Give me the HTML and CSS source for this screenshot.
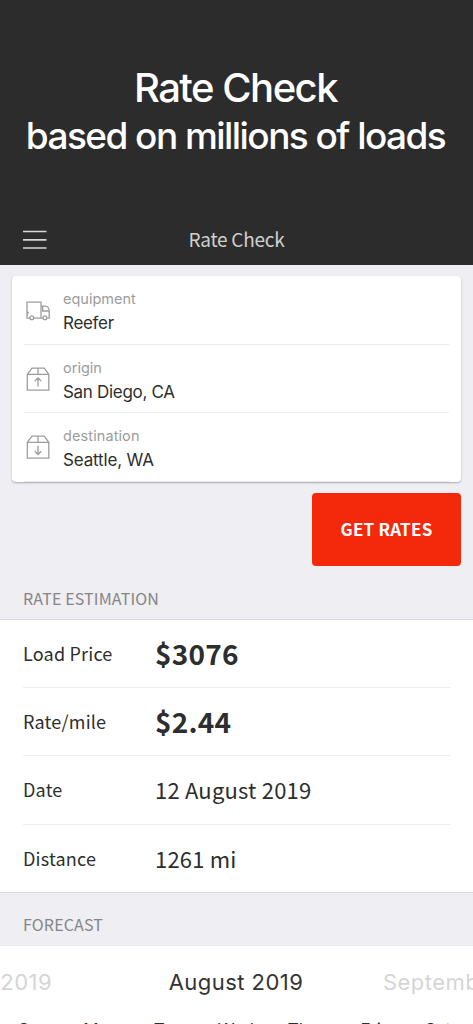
FILE: index.html
```html
<!DOCTYPE html>
<html lang="en">
<head>
<meta charset="utf-8">
<title>Rate Check</title>
<link rel="stylesheet" href="styles.css">
</head>
<body>
<main class="screen">
  <header class="hero">
    <h1 class="headline"><span class="headline-top">Rate Check</span><br><span class="headline-sub">based on millions of loads</span></h1>
    <nav class="nav">
      <svg class="menu" viewBox="0 0 24 20" stroke="#d6d6d6" stroke-width="1.7"><path d="M0 1.5H23.5M0 9.8H23.5M0 18H23.5"/></svg>
      <span class="nav-title">Rate Check</span>
    </nav>
  </header>
  <section class="card">
    <div class="field">
      <svg class="icon truck" viewBox="0 0 24 24"><path d="M4 18.2H1V2.2H15V18.2H7M15 6.2H19.5C22 6.4 23.2 9 23.2 11V18.2H21.2M15.2 18.2H17.2M16.7 6.2V11H23M1 12.5H3M1 15H2.2"/><circle cx="5.8" cy="17.8" r="1.9"/><circle cx="18.9" cy="17.8" r="1.9"/></svg>
      <div class="field-text"><span class="label">equipment</span><span class="value">Reefer</span></div>
    </div>
    <div class="field">
      <svg class="icon" viewBox="0 0 24 24"><path d="M1.3 7.3L6 1.1H18.2L22.8 7.3V23.2H1.3ZM1.3 7.3H22.8M12 1.1V7.3M12 19.5V11M8.8 14L12 10.8L15.2 14"/></svg>
      <div class="field-text"><span class="label">origin</span><span class="value">San Diego, CA</span></div>
    </div>
    <div class="field">
      <svg class="icon" viewBox="0 0 24 24"><path d="M1.3 7.3L6 1.1H18.2L22.8 7.3V23.2H1.3ZM1.3 7.3H22.8M12 1.1V7.3M12 10.8V19.3M8.8 16.3L12 19.5L15.2 16.3"/></svg>
      <div class="field-text"><span class="label destination">destination</span><span class="value seattle">Seattle, WA</span></div>
    </div>
  </section>
  <button class="cta" type="button">GET RATES</button>
  <h2 class="section-title estimation-title">RATE ESTIMATION</h2>
  <section class="rates">
    <div class="rate"><span class="name">Load Price</span><strong class="amount">$3076</strong></div>
    <div class="rate second"><span class="name">Rate/mile</span><strong class="amount">$2.44</strong></div>
    <div class="rate"><span class="name">Date</span><span class="detail">12 August 2019</span></div>
    <div class="rate"><span class="name">Distance</span><span class="detail">1261 mi</span></div>
  </section>
  <h2 class="section-title forecast-title">FORECAST</h2>
  <section class="forecast">
    <div class="months"><span class="prev">July 2019</span><span class="current">August 2019</span><span class="next">September 2019</span></div>
    <div class="days"><span>Sun</span><span>Mon</span><span>Tue</span><span>Wed</span><span>Thu</span><span>Fri</span><span>Sat</span></div>
  </section>
</main>
</body>
</html>
```
FILE: styles.css
```css
* { box-sizing: border-box; }
body { margin: 0; font-family: "Noto Sans CJK SC", sans-serif; color: #2d2e2e; }
.screen { width: 473px; height: 1024px; overflow: hidden; background: #efeef3; white-space: nowrap; }
.hero { height: 265px; background: #2c2c2c; padding-top: 64px; }
.headline { margin: 0; height: 150px; padding-right: 2px; font: 500 40px/47px Inter, sans-serif; color: #fff; text-align: center; }
.headline-top { letter-spacing: -1.5px; }
.headline-sub { font-size: 37px; letter-spacing: -1.55px; }
.nav { display: grid; grid-template-columns: 1fr auto 1fr; align-items: center; height: 51px; padding: 0 23px; }
.menu { width: 24px; height: 20px; }
.nav-title { font-size: 19px; line-height: 28px; padding-bottom: 2px; letter-spacing: -0.25px; color: #d0d0d0; }
.card { margin: 11px 12px 0; height: 206px; padding: 0 12px; background: #fff; border-radius: 4px; box-shadow: 0 1px 2px rgba(0,0,0,.3); }
.field { display: flex; height: 68.5px; padding: 12px 0 0 2px; border-bottom: 1px solid #ebebed; }
.icon { flex: none; width: 24px; height: 24px; margin-top: 10px; fill: none; stroke: #9d9d9d; stroke-width: 1.3; }
.truck { margin-top: 12px; }
.field-text { display: flex; flex-direction: column; margin-left: 13px; font-family: Inter, sans-serif; }
.label { font-size: 14.5px; line-height: 22px; color: #9c9c9c; }
.destination { letter-spacing: 0.1px; }
.value { font-size: 17px; line-height: 26px; letter-spacing: -0.3px; }
.seattle { letter-spacing: -0.15px; }
.cta { display: block; margin: 11px 12px 0 auto; width: 149px; height: 73px; padding: 0 0 1px; border: 0; border-radius: 4px; background: #f4290b; color: #fff; font: 700 17px/24px "Noto Sans CJK SC", sans-serif; letter-spacing: 0.25px; }
.section-title { margin: 0; padding-left: 23px; color: #858585; font-size: 16px; font-weight: 400; letter-spacing: 0.15px; }
.estimation-title { height: 53px; line-height: 65px; }
.rates { height: 274px; padding: 0 23px; background: #fff; border-top: 1px solid #d8d8dc; border-bottom: 1px solid #d8d8d8; }
.rate { display: flex; align-items: center; height: 68.5px; padding-bottom: 2px; border-bottom: 1px solid #ededee; }
.rate:first-child { height: 67.5px; padding-bottom: 1px; }
.rate.second { padding-bottom: 0; }
.rate:last-child { border-bottom: 0; }
.name { width: 132px; font-size: 18px; letter-spacing: 0.2px; }
.amount { font-size: 28px; font-weight: 700; letter-spacing: 0.2px; }
.detail { font-size: 22px; letter-spacing: 0.2px; }
.forecast-title { height: 53px; line-height: 63px; }
.forecast { height: 78px; overflow: hidden; background: #fff; font-family: Inter, sans-serif; }
.months { display: grid; grid-template-columns: 52px 1fr 90px; height: 73px; line-height: 73px; font-size: 22px; letter-spacing: 0.45px; color: #d5d5d5; }
.prev { justify-self: end; }
.current { justify-self: center; color: #333; padding-left: 37px; }
.days { display: grid; grid-template-columns: repeat(7, 67.4px); text-align: center; font-size: 17px; line-height: 22px; }
```
